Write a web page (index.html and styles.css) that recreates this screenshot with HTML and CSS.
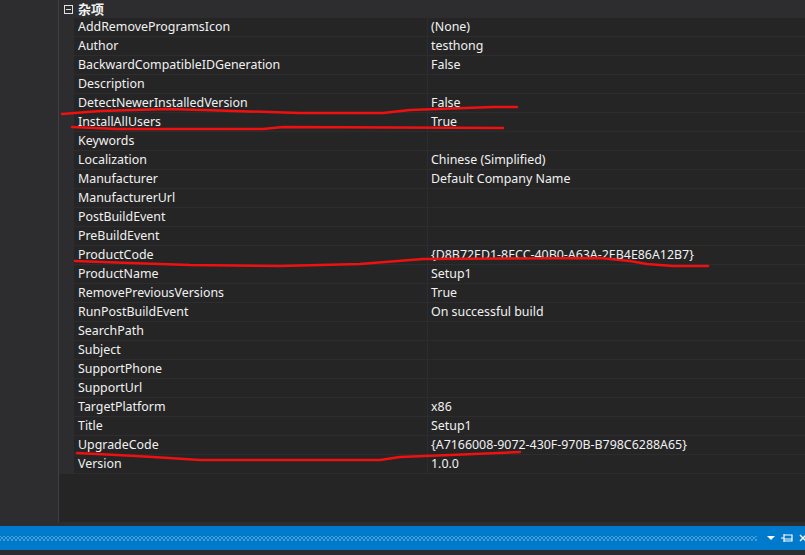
FILE: index.html
```html
<!DOCTYPE html>
<html>
<head>
<meta charset="utf-8">
<link rel="stylesheet" href="styles.css">
</head>
<body>
<div class="main">
  <div class="left"></div>
  <div class="grid">
    <div class="cat">
      <span class="toggle"><span class="minus"></span></span>
      <span class="cat-name">杂项</span>
    </div>
    <div class="row"><span class="gut"></span><span class="name">AddRemoveProgramsIcon</span><span class="val">(None)</span></div>
    <div class="row"><span class="gut"></span><span class="name">Author</span><span class="val">testhong</span></div>
    <div class="row"><span class="gut"></span><span class="name">BackwardCompatibleIDGeneration</span><span class="val">False</span></div>
    <div class="row"><span class="gut"></span><span class="name">Description</span><span class="val"></span></div>
    <div class="row"><span class="gut"></span><span class="name">DetectNewerInstalledVersion</span><span class="val">False</span></div>
    <div class="row"><span class="gut"></span><span class="name">InstallAllUsers</span><span class="val">True</span></div>
    <div class="row"><span class="gut"></span><span class="name">Keywords</span><span class="val"></span></div>
    <div class="row"><span class="gut"></span><span class="name">Localization</span><span class="val">Chinese (Simplified)</span></div>
    <div class="row"><span class="gut"></span><span class="name">Manufacturer</span><span class="val">Default Company Name</span></div>
    <div class="row"><span class="gut"></span><span class="name">ManufacturerUrl</span><span class="val"></span></div>
    <div class="row"><span class="gut"></span><span class="name">PostBuildEvent</span><span class="val"></span></div>
    <div class="row"><span class="gut"></span><span class="name">PreBuildEvent</span><span class="val"></span></div>
    <div class="row"><span class="gut"></span><span class="name">ProductCode</span><span class="val">{D8B72ED1-8ECC-40B0-A63A-2EB4E86A12B7}</span></div>
    <div class="row"><span class="gut"></span><span class="name">ProductName</span><span class="val">Setup1</span></div>
    <div class="row"><span class="gut"></span><span class="name">RemovePreviousVersions</span><span class="val">True</span></div>
    <div class="row"><span class="gut"></span><span class="name">RunPostBuildEvent</span><span class="val">On successful build</span></div>
    <div class="row"><span class="gut"></span><span class="name">SearchPath</span><span class="val"></span></div>
    <div class="row"><span class="gut"></span><span class="name">Subject</span><span class="val"></span></div>
    <div class="row"><span class="gut"></span><span class="name">SupportPhone</span><span class="val"></span></div>
    <div class="row"><span class="gut"></span><span class="name">SupportUrl</span><span class="val"></span></div>
    <div class="row"><span class="gut"></span><span class="name">TargetPlatform</span><span class="val">x86</span></div>
    <div class="row"><span class="gut"></span><span class="name">Title</span><span class="val">Setup1</span></div>
    <div class="row"><span class="gut"></span><span class="name">UpgradeCode</span><span class="val">{A7166008-9072-430F-970B-B798C6288A65}</span></div>
    <div class="row"><span class="gut"></span><span class="name">Version</span><span class="val">1.0.0</span></div>
  </div>
</div>
<div class="gap"></div>
<div class="toolbar">
  <div class="dots"></div>
  <div class="tools">
    <svg class="ico" width="10" height="10" viewBox="0 0 10 10"><path d="M1 3 L9 3 L5 7 Z" fill="#ffffff"/></svg>
    <svg class="ico" width="14" height="12" viewBox="0 0 14 12"><path d="M1 6 H4 M4 2 V10 M4 3 H12 V9 H4 M4 7 H12" stroke="#ffffff" stroke-width="1.2" fill="none"/></svg>
    <svg class="ico" width="10" height="10" viewBox="0 0 10 10"><path d="M2 2 L8 8 M8 2 L2 8" stroke="#ffffff" stroke-width="1.4"/></svg>
  </div>
</div>
<div class="bottom"></div>
<svg class="marks" width="805" height="555" viewBox="0 0 805 555">
  <polyline points="62,114 100,111 167,109 203,110 300,113 383,113 410,110 493,107 517,107"/>
  <polyline points="72,127 117,129 263,129 283,127 503,128"/>
  <polyline points="75,261 130,263 190,265 280,266 360,264 423,259 600,258 630,261 647,264 673,266 708,266"/>
  <polyline points="77,453 117,455 153,457 200,460 380,460 400,457 450,455 520,452"/>
</svg>
</body>
</html>
```
FILE: styles.css
```css
html, body {
  margin: 0;
  padding: 0;
}
body {
  width: 805px;
  height: 555px;
  overflow: hidden;
  background: #2d2d30;
  font-family: "Noto Sans", "Noto Sans CJK SC", sans-serif;
  font-size: 12.4px;
  color: #f1f1f1;
  position: relative;
}
.main {
  display: flex;
  height: 522px;
}
.left {
  width: 58px;
  border-right: 1px solid #3f3f46;
  background: #2d2d30;
}
.grid {
  flex: 1;
  background: #252526;
  display: flex;
  flex-direction: column;
}
.cat {
  height: 18px;
  display: flex;
  align-items: center;
  background: #2d2d30;
}
.toggle {
  width: 19px;
  height: 16px;
  display: flex;
  align-items: center;
  justify-content: center;
}
.minus {
  width: 7px;
  height: 7px;
  border: 1px solid #e0e0e0;
  position: relative;
}
.minus::after {
  content: "";
  position: absolute;
  left: 1px;
  right: 1px;
  top: 3px;
  height: 1px;
  background: #e0e0e0;
}
.cat-name {
  font-weight: bold;
  font-size: 13px;
  margin-top: -2px;
}
.row {
  display: grid;
  grid-template-columns: 15px 354px 1fr;
  height: 19px;
  line-height: 18px;
}
.gut {
  background: #2d2d30;
}
.name {
  padding-left: 4px;
  border-bottom: 1px solid #2d2d30;
  border-right: 1px solid #2d2d30;
  white-space: nowrap;
}
.val {
  padding-left: 3px;
  border-bottom: 1px solid #2d2d30;
  white-space: nowrap;
}
.gap {
  height: 4px;
  background: #2d2d30;
}
.toolbar {
  height: 24px;
  background: #007acc;
  display: flex;
  align-items: center;
}
.dots {
  flex: 0 0 757px;
  height: 5px;
  background-image:
    radial-gradient(circle, #4d9fd8 0.7px, transparent 0.8px),
    radial-gradient(circle, #4d9fd8 0.7px, transparent 0.8px);
  background-size: 4px 4px, 4px 4px;
  background-position: 0 0, 2px 2px;
}
.tools {
  display: flex;
  align-items: center;
  gap: 4px;
  padding-left: 9px;
}
.ico {
  display: block;
}
.bottom {
  height: 5px;
  background: #2d2d30;
}
.marks {
  position: absolute;
  left: 0;
  top: 0;
  pointer-events: none;
}
.marks polyline {
  fill: none;
  stroke: #f01010;
  stroke-width: 2.5;
  stroke-linejoin: round;
  stroke-linecap: round;
}
```
